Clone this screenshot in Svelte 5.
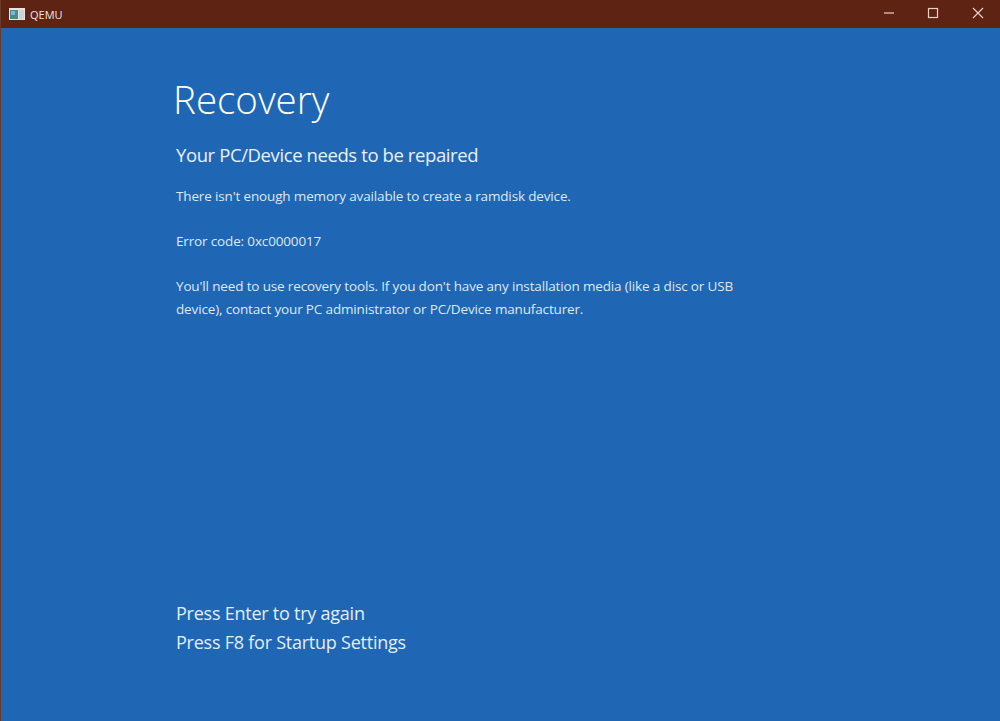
<script lang="ts">
	const lines = ['Press Enter to try again', 'Press F8 for Startup Settings'];
</script>

<div class="window">
	<header class="titlebar">
		<div class="app">
			<svg class="app-icon" width="16" height="12" viewBox="0 0 16 12" aria-hidden="true">
				<rect width="16" height="12" fill="#e8e4e2" />
				<rect x="1" y="2" width="8" height="9" fill="#3f8f8a" />
				<rect x="2" y="3" width="4" height="4" fill="#7fb6d8" />
				<rect x="10" y="2" width="5" height="9" fill="#c9d4d8" />
			</svg>
			<span class="app-name">QEMU</span>
		</div>
		<div class="controls">
			<svg class="control" viewBox="0 0 45 28" aria-hidden="true">
				<path d="M19 13h10" stroke="#e6d0c8" fill="none" stroke-width="1.2" />
			</svg>
			<svg class="control" viewBox="0 0 45 28" aria-hidden="true">
				<rect x="18.5" y="8.5" width="9" height="9" stroke="#e6d0c8" fill="none" stroke-width="1.2" />
			</svg>
			<svg class="control" viewBox="0 0 45 28" aria-hidden="true">
				<path d="M18 8l10 10M28 8L18 18" stroke="#e6d0c8" fill="none" stroke-width="1.2" />
			</svg>
		</div>
	</header>

	<main class="screen">
		<h1 class="title">Recovery</h1>
		<h2 class="subtitle">Your PC/Device needs to be repaired</h2>
		<p class="text first">There isn't enough memory available to create a ramdisk device.</p>
		<p class="text">Error code: 0xc0000017</p>
		<p class="text">
			You'll need to use recovery tools. If you don't have any installation media (like a disc or USB<br />
			device), contact your PC administrator or PC/Device manufacturer.
		</p>

		<div class="options">
			{#each lines as line}
				<div class="option">{line}</div>
			{/each}
		</div>
	</main>
</div>

<style>
	:global(body) {
		margin: 0;
		background: #1f67b4;
		font-family: 'Open Sans', 'Noto Sans', sans-serif;
		color: #fff;
	}

	.window {
		display: flex;
		flex-direction: column;
		height: 721px;
		overflow: hidden;
		border-left: 1px solid #6b3a2a;
		box-sizing: border-box;
	}

	.titlebar {
		flex: none;
		height: 28px;
		margin-left: -1px;
		display: flex;
		align-items: center;
		justify-content: space-between;
		background: #5f2314;
	}

	.app {
		display: flex;
		align-items: center;
		gap: 5px;
		padding-left: 9px;
	}

	.app-icon {
		display: block;
	}

	.app-name {
		font-size: 11px;
		color: #f0e6e2;
	}

	.controls {
		display: flex;
	}

	.control {
		display: block;
		width: 45px;
		height: 28px;
	}

	.screen {
		flex: 1;
		display: flex;
		flex-direction: column;
		padding-left: 175px;
	}

	.title {
		margin: 41px 0 0 -3px;
		font-size: 38.5px;
		font-weight: 300;
		line-height: 60px;
		color: #fff;
	}

	.subtitle {
		margin: 13px 0 0;
		font-size: 18.5px;
		font-weight: 400;
		letter-spacing: -0.4px;
		line-height: 26px;
		color: #eaf1f9;
	}

	.text {
		margin: 22.5px 0 0;
		width: 640px;
		font-size: 13.5px;
		letter-spacing: -0.15px;
		line-height: 22.5px;
		color: #dde8f4;
	}

	.text.first {
		margin-top: 17px;
	}

	.options {
		margin-top: auto;
		margin-bottom: 64px;
	}

	.option {
		font-size: 18px;
		letter-spacing: -0.24px;
		line-height: 29px;
		color: #e4edf7;
	}
</style>
